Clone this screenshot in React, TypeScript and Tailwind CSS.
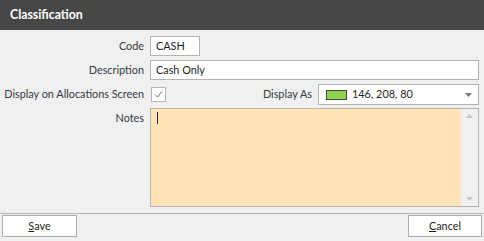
import React from "react";

const font = { fontFamily: 'Lato, "Noto Sans", Arial, sans-serif' };

export default function App() {
  return (
    <div className="w-[484px] h-[241px] bg-[#f0f0f0] flex flex-col overflow-hidden text-[10.85px] text-[#353945]" style={font}>
      <div className="h-[30px] bg-[#474747] flex items-center px-[10px] text-white font-bold text-[12.3px]">Classification</div>
      <div className="flex flex-col pt-[6px] pr-[5px]">
        <div className="flex items-center h-[20px]">
          <div className="w-[144px] text-right">Code</div>
          <div className="ml-[6px] w-[50px] h-[20px] bg-white border border-[#b4b4b4] flex items-center px-[5px] text-[#1e1e1e]">CASH</div>
        </div>
        <div className="flex items-center h-[20px] mt-[4px]">
          <div className="w-[144px] text-right">Description</div>
          <div className="ml-[6px] flex-1 h-[20px] bg-white border border-[#b4b4b4] flex items-center px-[5px] text-[#1e1e1e]">Cash Only</div>
        </div>
        <div className="flex items-center h-[21px] mt-[4px]">
          <div className="w-[144px] text-right whitespace-nowrap">Display on Allocations Screen</div>
          <div className="ml-[7px] w-[15px] h-[15px] bg-white border border-[#b4b4b4] flex items-center justify-center">
            <svg width="11" height="11" viewBox="0 0 11 11"><path d="M2 5.5 L4.5 8 L9 2.5" fill="none" stroke="#6a6a6a" strokeWidth="1" /></svg>
          </div>
          <div className="flex-1 flex items-center justify-end">
            <div className="mr-[6px]">Display As</div>
            <div className="w-[161px] h-[21px] bg-white border border-[#b4b4b4] flex items-center pl-[7px] pr-[6px] text-[#1e1e1e]">
              <div className="w-[21px] h-[10px] bg-[#92d050] border border-[#444]" />
              <div className="ml-[5px] flex-1">146, 208, 80</div>
              <svg width="7" height="4" viewBox="0 0 7 4"><path d="M0 0 H7 L3.5 4 Z" fill="#777" /></svg>
            </div>
          </div>
        </div>
        <div className="flex mt-[3px]">
          <div className="w-[144px] text-right pt-[2px]">Notes</div>
          <div className="ml-[6px] flex-1 h-[99px] border border-[#b4b4b4] bg-[#fee4b6] flex">
            <div className="flex-1 relative">
              <div className="absolute left-[6px] top-[3px] w-[1px] h-[12px] bg-[#1a2a4a]" />
            </div>
            <div className="w-[17px] bg-[#f1f1f1] flex flex-col items-center justify-between py-[5px]">
              <svg width="7" height="4" viewBox="0 0 7 4"><path d="M0 4 H7 L3.5 0 Z" fill="#c4c4c4" /></svg>
              <svg width="7" height="4" viewBox="0 0 7 4"><path d="M0 0 H7 L3.5 4 Z" fill="#c4c4c4" /></svg>
            </div>
          </div>
        </div>
      </div>
      <div className="mt-[6px] border-t border-[#b4b4b4] flex justify-between px-[2px] pt-[1px]">
        <div className="w-[75px] h-[22px] bg-white border border-[#acacac] flex items-center justify-center text-[#1e1e1e]"><span><span className="underline">S</span>ave</span></div>
        <div className="w-[74px] h-[22px] bg-white border border-[#acacac] flex items-center justify-center text-[#1e1e1e]"><span><span className="underline">C</span>ancel</span></div>
      </div>
    </div>
  );
}
